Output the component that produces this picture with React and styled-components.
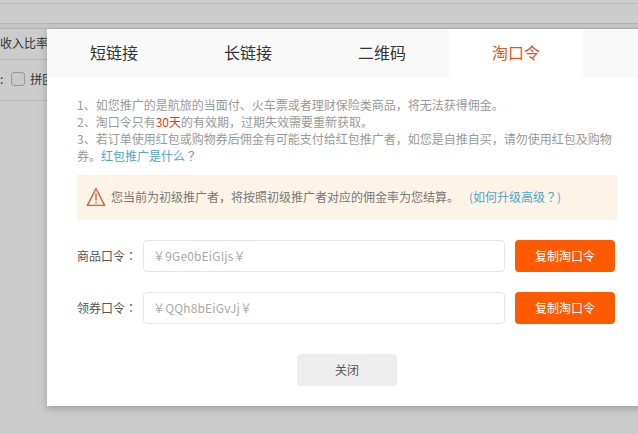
import React from "react";
import styled, { createGlobalStyle } from "styled-components";

const Global = createGlobalStyle`
  html, body {
    margin: 0;
    padding: 0;
    width: 638px;
    height: 434px;
    overflow: hidden;
    background: #cccccc;
    font-family: "Noto Sans CJK SC", "Noto Sans", sans-serif;
  }
  * { box-sizing: border-box; }
`;

const Page = styled.div`
  position: relative;
  width: 638px;
  height: 434px;
  overflow: hidden;
  background: #cccccc;
`;

const TopLine = styled.div`
  height: 24px;
  border-bottom: 1px solid #b4b4b4;
  padding-top: 3px;
  &::before {
    content: "";
    display: block;
    height: 1px;
    background: #b8b8b8;
  }
`;

const TopBand = styled.div`
  height: 5px;
  background: #c6c6c6;
  border-bottom: 1px solid #b4b4b4;
`;

const BackRow = styled.div`
  height: ${(p) => p.$h}px;
  display: flex;
  align-items: center;
  gap: 5px;
  padding-bottom: 3px;
  font-size: 12px;
  color: #333;
  border-bottom: 1px solid #b9b9b9;
  white-space: nowrap;
`;

const BackCheck = styled.span`
  width: 14px;
  height: 14px;
  margin-left: 3px;
  border: 1px solid #999;
  border-radius: 3px;
  background: #c9c9c9;
`;

const Modal = styled.div`
  position: absolute;
  left: 47px;
  top: 29px;
  width: 640px;
  height: 377px;
  background: #fff;
  box-shadow: 0 3px 8px rgba(0, 0, 0, 0.22);
`;

const Tabs = styled.div`
  display: flex;
  height: 48px;
  background: #f9f9f9;
`;

const Tab = styled.div`
  width: 134px;
  display: flex;
  align-items: center;
  justify-content: center;
  padding-bottom: 2px;
  font-size: 16px;
  color: ${(p) => (p.$active ? "#e9541c" : "#333")};
  background: ${(p) => (p.$active ? "#fff" : "transparent")};
`;

const Body = styled.div`
  width: 570px;
  padding: 19px 0 0 30px;
`;

const Notes = styled.div`
  width: 540px;
  font-size: 12px;
  line-height: 17px;
  color: #999;
`;

const Red = styled.span`
  color: #e8380d;
`;

const Link = styled.span`
  color: #4ea6c9;
`;

/* centred full-width punctuation, as in the reference */
const Punct = styled.span`
  font-family: "Noto Sans CJK TC", sans-serif;
`;

const Alert = styled.div`
  display: flex;
  align-items: center;
  width: 540px;
  height: 45px;
  margin-top: 11px;
  padding: 0 0 2px 9px;
  background: #fdf3e7;
  font-size: 12px;
  color: #777;
  white-space: nowrap;
`;

const AlertText = styled.span`
  margin-left: 5px;
`;

const AlertLink = styled(Link)`
  margin-left: 10px;
`;

const Field = styled.div`
  display: flex;
  align-items: center;
  height: 32px;
  margin-top: 20px;
`;

const Label = styled.label`
  width: 66px;
  padding-bottom: 2px;
  font-size: 12px;
  color: #555;
  white-space: nowrap;
`;

const CodeBox = styled.div`
  width: 362px;
  height: 32px;
  display: flex;
  align-items: center;
  padding: 0 0 2px 9px;
  border: 1px solid #e6e6e6;
  border-radius: 4px;
  background: #fff;
  font-size: 12px;
  letter-spacing: 0.15px;
  color: #aaa;
`;

const CopyButton = styled.button`
  width: 100px;
  height: 32px;
  margin-left: 10px;
  padding: 0 0 2px;
  border: 0;
  border-radius: 4px;
  background: #ff5a00;
  color: #fff;
  font-family: inherit;
  font-size: 12px;
`;

const Footer = styled.div`
  display: flex;
  justify-content: center;
  margin-top: 30px;
`;

const CloseButton = styled.button`
  width: 100px;
  height: 32px;
  padding: 0 0 2px;
  border: 0;
  border-radius: 4px;
  background: #eeeeef;
  color: #555;
  font-family: inherit;
  font-size: 12px;
`;

const WarnIcon = () => (
  <svg width="20" height="20" viewBox="0 0 20 20" fill="none" stroke="#e8593f" strokeWidth="1.4" strokeLinejoin="round">
    <path d="M10 1.5 L18.6 18.4 H1.4 Z" />
    <path d="M10 7 V13" strokeLinecap="round" />
    <path d="M10 15.2 V15.8" strokeLinecap="round" />
  </svg>
);

const tabs = ["短链接", "长链接", "二维码", "淘口令"];

const App = () => {
  return (
    <Page>
      <Global />
      <TopLine />
      <TopBand />
      <BackRow $h={31}>收入比率</BackRow>
      <BackRow $h={41}>
        :
        <BackCheck />
        拼团
      </BackRow>
      <Modal>
        <Tabs>
          {tabs.map((t) => (
            <Tab key={t} $active={t === "淘口令"}>
              {t}
            </Tab>
          ))}
        </Tabs>
        <Body>
          <Notes>
            1、如您推广的是航旅的当面付、火车票或者理财保险类商品，将无法获得佣金。
            <br />
            2、淘口令只有<Red>30天</Red>的有效期，过期失效需要重新获取。
            <br />
            3、若订单使用红包或购物券后佣金有可能支付给红包推广者，如您是自推自买，请勿使用红包及购物
            <br />
            券。
            <Link>
              红包推广是什么<Punct>？</Punct>
            </Link>
          </Notes>
          <Alert>
            <WarnIcon />
            <AlertText>您当前为初级推广者，将按照初级推广者对应的佣金率为您结算。</AlertText>
            <AlertLink>
              (如何升级高级<Punct>？</Punct>)
            </AlertLink>
          </Alert>
          <Field>
            <Label>
              商品口令<Punct>：</Punct>
            </Label>
            <CodeBox>￥9Ge0bEiGIjs￥</CodeBox>
            <CopyButton>复制淘口令</CopyButton>
          </Field>
          <Field>
            <Label>
              领券口令<Punct>：</Punct>
            </Label>
            <CodeBox>￥QQh8bEiGvJj￥</CodeBox>
            <CopyButton>复制淘口令</CopyButton>
          </Field>
          <Footer>
            <CloseButton>关闭</CloseButton>
          </Footer>
        </Body>
      </Modal>
    </Page>
  );
};

export default App;
